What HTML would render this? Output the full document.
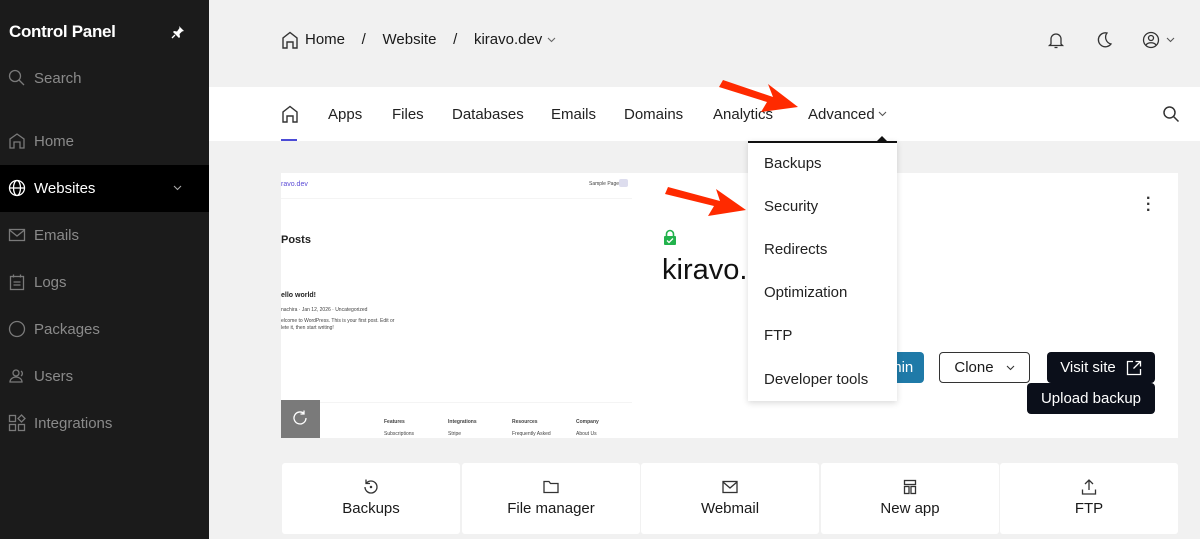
<!DOCTYPE html>
<html><head><meta charset="utf-8"><style>
*{box-sizing:border-box;margin:0;padding:0}
body{width:1200px;height:539px;overflow:hidden;background:#f1f1f1;font-family:"Liberation Sans",sans-serif;color:#1a1a1a;position:relative}
.abs{position:absolute}
#side{left:0;top:0;width:209px;height:539px;background:#1b1b1b}
.si{position:absolute;left:8px;font-size:15px;color:#8a8a8a;display:flex;align-items:center;gap:8px}
.si svg{width:18px;height:18px;stroke:#7a7a7a;fill:none;stroke-width:1.3}
.nav{position:absolute;top:106px;font-size:15px;color:#222}
.dd{left:748px;top:141px;width:149px;height:260px;background:#fff;box-shadow:0 2px 6px rgba(0,0,0,.15);border-top:2px solid #111}
.dd div{position:absolute;left:16px;font-size:15px;color:#222}
.tile{position:absolute;top:463px;width:178px;height:71px;background:#fff;border-radius:3px;text-align:center;font-size:15px}
.tile svg{position:absolute;left:80px;top:15px;width:18px;height:18px;stroke:#333;fill:none;stroke-width:1.3}
.tile span{position:absolute;left:0;right:0;top:37px}
.btn{position:absolute;top:352px;height:31px;border-radius:4px;font-size:15px;display:flex;align-items:center;justify-content:center}
.chev{display:inline-block;vertical-align:middle}
</style></head><body>
<div id="side" class="abs">
 <div class="abs" style="left:9px;top:22px;font-size:17px;font-weight:bold;color:#fff;letter-spacing:-.3px">Control Panel</div>
 <svg class="abs" style="left:171px;top:25px" width="14" height="14" viewBox="0 0 14 14"><path d="M8 1l5 5-2 .5-2.5 2.5.5 3-1 1-6-6 1-1 3 .5L8.5 3z" fill="#fff"/><path d="M4 10L1 13" stroke="#fff" stroke-width="1.3"/></svg>
 <div class="si" style="top:69px"><svg viewBox="0 0 18 18"><circle cx="7" cy="7" r="5.5"/><path d="M11 11l5 5"/></svg>Search</div>
 <div class="si" style="top:132px"><svg viewBox="0 0 18 18"><path d="M2 16V7l7-5 7 5v9h-4v-6H6v6z"/></svg>Home</div>
 <div class="abs" style="left:0;top:165px;width:209px;height:47px;background:#000"></div>
 <div class="si" style="top:179px;color:#fff"><svg viewBox="0 0 18 18" style="stroke:#fff"><circle cx="9" cy="9" r="7.5"/><ellipse cx="9" cy="9" rx="3.5" ry="7.5"/><path d="M1.5 9h15"/></svg>Websites</div>
 <svg class="abs" style="left:173px;top:185px" width="9" height="6" viewBox="0 0 9 6" fill="none" stroke="#aaa" stroke-width="1.1"><path d="M1 1l3.5 3.5L8 1"/></svg>
 <div class="si" style="top:226px"><svg viewBox="0 0 18 18"><rect x="1.5" y="3.5" width="15" height="11"/><path d="M1.5 4l7.5 6 7.5-6"/></svg>Emails</div>
 <div class="si" style="top:273px"><svg viewBox="0 0 18 18"><rect x="2.5" y="3.5" width="13" height="13"/><path d="M5.5 1.5v3M12.5 1.5v3M5.5 9h7M5.5 12h7"/></svg>Logs</div>
 <div class="si" style="top:320px"><svg viewBox="0 0 18 18"><circle cx="9" cy="9" r="7.5"/></svg>Packages</div>
 <div class="si" style="top:367px"><svg viewBox="0 0 18 18"><circle cx="8" cy="6" r="3"/><path d="M2 15c0-3 3-5 6-5s6 2 6 5zM13 4a3 3 0 010 5"/></svg>Users</div>
 <div class="si" style="top:414px"><svg viewBox="0 0 18 18"><rect x="1.5" y="1.5" width="6" height="6"/><rect x="1.5" y="10.5" width="6" height="6"/><rect x="10.5" y="10.5" width="6" height="6"/><path d="M13.5 1l3.5 3.5-3.5 3.5-3.5-3.5z"/></svg>Integrations</div>
</div>

<svg class="abs" style="left:281px;top:31px" width="18" height="18" viewBox="0 0 18 18" fill="none" stroke="#333" stroke-width="1.4"><path d="M2 17V7l7-5.5 7 5.5v10h-4v-6H6v6z"/></svg>
<div class="abs" style="left:305px;top:31px;font-size:15px">Home&nbsp;&nbsp;&nbsp;&nbsp;/&nbsp;&nbsp;&nbsp;&nbsp;Website&nbsp;&nbsp;&nbsp;&nbsp;/&nbsp;&nbsp;&nbsp;&nbsp;kiravo.dev</div>
<svg class="abs" style="left:547px;top:37px" width="9" height="6" viewBox="0 0 9 6" fill="none" stroke="#666" stroke-width="1.1"><path d="M1 1l3.5 3.5L8 1"/></svg>
<svg class="abs" style="left:1047px;top:31px" width="18" height="18" viewBox="0 0 18 18" fill="none" stroke="#333" stroke-width="1.3"><path d="M4 13V8a5 5 0 0110 0v5l1.5 1.5h-13zM7.5 16.5h3"/></svg>
<svg class="abs" style="left:1095px;top:31px" width="18" height="18" viewBox="0 0 18 18" fill="none" stroke="#333" stroke-width="1.3"><path d="M12 2a7 7 0 104 11A7 7 0 0112 2z"/></svg>
<svg class="abs" style="left:1142px;top:31px" width="18" height="18" viewBox="0 0 18 18" fill="none" stroke="#333" stroke-width="1.3"><circle cx="9" cy="9" r="7.5"/><circle cx="9" cy="7" r="2.5"/><path d="M4 14c2-3 8-3 10 0"/></svg>
<svg class="abs" style="left:1166px;top:37px" width="9" height="6" viewBox="0 0 9 6" fill="none" stroke="#555" stroke-width="1.1"><path d="M1 1l3.5 3.5L8 1"/></svg>

<div class="abs" style="left:209px;top:87px;width:991px;height:54px;background:#fff"></div>
<svg class="abs" style="left:281px;top:105px" width="18" height="18" viewBox="0 0 18 18" fill="none" stroke="#333" stroke-width="1.4"><path d="M2 17V7l7-5.5 7 5.5v10h-4v-6H6v6z"/></svg>
<div class="abs" style="left:281px;top:139px;width:16px;height:2px;background:#4b4bd6"></div>
<div class="nav" style="left:328px">Apps</div>
<div class="nav" style="left:392px">Files</div>
<div class="nav" style="left:452px">Databases</div>
<div class="nav" style="left:551px">Emails</div>
<div class="nav" style="left:624px">Domains</div>
<div class="nav" style="left:713px">Analytics</div>
<div class="nav" style="left:808px">Advanced</div>
<svg class="abs" style="left:878px;top:111px" width="9" height="6" viewBox="0 0 9 6" fill="none" stroke="#555" stroke-width="1.1"><path d="M1 1l3.5 3.5L8 1"/></svg>
<svg class="abs" style="left:1162px;top:105px" width="18" height="18" viewBox="0 0 18 18" fill="none" stroke="#333" stroke-width="1.5"><circle cx="7.5" cy="7.5" r="5.5"/><path d="M11.5 11.5l5 5"/></svg>

<div class="abs" style="left:281px;top:173px;width:897px;height:265px;background:#fff"></div>
<div class="abs" style="left:281px;top:173px;width:351px;height:265px;background:#fff;overflow:hidden;font-size:6px;color:#444">
 <div class="abs" style="left:0;top:8px;color:#5b4bd6;font-size:7px">ravo.dev</div>
 <div class="abs" style="left:308px;top:8px;font-size:5px">Sample Page</div>
 <div class="abs" style="left:338px;top:6px;width:9px;height:8px;background:#dde;border-radius:2px"></div>
 <div class="abs" style="left:0;top:25px;width:351px;height:1px;background:#f4f4f4"></div>
 <div class="abs" style="left:0;top:61px;font-size:11px;font-weight:bold;color:#222">Posts</div>
 <div class="abs" style="left:0;top:119px;font-size:7px;font-weight:bold;color:#222">ello world!</div>
 <div class="abs" style="left:0;top:134px;font-size:5px">nachira · Jan 12, 2026 · Uncategorized</div>
 <div class="abs" style="left:0;top:145px;font-size:5px;line-height:7px">elcome to WordPress. This is your first post. Edit or<br>lete it, then start writing!</div>
 <div class="abs" style="left:0;top:229px;width:351px;height:1px;background:#f4f4f4"></div>
 <div class="abs" style="left:103px;top:246px;font-size:5px;font-weight:bold">Features</div>
 <div class="abs" style="left:167px;top:246px;font-size:5px;font-weight:bold">Integrations</div>
 <div class="abs" style="left:231px;top:246px;font-size:5px;font-weight:bold">Resources</div>
 <div class="abs" style="left:295px;top:246px;font-size:5px;font-weight:bold">Company</div>
 <div class="abs" style="left:103px;top:258px;font-size:5px">Subscriptions</div>
 <div class="abs" style="left:167px;top:258px;font-size:5px">Stripe</div>
 <div class="abs" style="left:231px;top:258px;font-size:5px">Frequently Asked</div>
 <div class="abs" style="left:295px;top:258px;font-size:5px">About Us</div>
 <div class="abs" style="left:0;top:227px;width:39px;height:38px;background:#7a7a7a"></div>
 <svg class="abs" style="left:10px;top:236px" width="18" height="18" viewBox="0 0 18 18" fill="none" stroke="#fff" stroke-width="1.3"><path d="M15 9a6 6 0 11-2-4.5M13 1.5v3.5h-3.5"/></svg>
</div>
<svg class="abs" style="left:663px;top:229px" width="14" height="16" viewBox="0 0 14 16"><path d="M3.5 7V5a3.5 3.5 0 017 0v2" fill="none" stroke="#22b24c" stroke-width="1.6"/><rect x="1" y="7" width="12" height="9" rx="1" fill="#22b24c"/><path d="M4 11.5l2 2 4-4" stroke="#fff" stroke-width="1.3" fill="none"/></svg>
<div class="abs" style="left:662px;top:254px;font-size:29px;color:#111">kiravo.dev</div>
<div class="abs" style="left:1146px;top:196px;font-size:16px;font-weight:bold;line-height:6px;color:#333">·<br>·<br>·</div>
<div class="btn" style="left:860px;width:64px;background:#1f7aa8;color:#fff">Admin</div>
<div class="btn" style="left:939px;width:91px;border:1px solid #333;background:#fff">Clone <svg style="margin-left:12px" width="9" height="6" viewBox="0 0 9 6" fill="none" stroke="#333" stroke-width="1.1"><path d="M1 1l3.5 3.5L8 1"/></svg></div>
<div class="btn" style="left:1047px;width:108px;background:#0b0f1a;color:#fff">Visit site <svg style="margin-left:10px" width="16" height="16" viewBox="0 0 16 16" fill="none" stroke="#fff" stroke-width="1.3"><path d="M7 1.5H1.5v13h13V9M9.5 1.5h5v5M14.5 1.5l-7 7"/></svg></div>
<div class="btn" style="left:1027px;top:383px;width:128px;background:#0b0f1a;color:#fff">Upload backup</div>

<div class="abs dd">
 <div style="top:12px">Backups</div><div style="top:55px">Security</div><div style="top:98px">Redirects</div>
 <div style="top:141px">Optimization</div><div style="top:184px">FTP</div><div style="top:228px">Developer tools</div>
</div>
<div class="abs" style="left:877px;top:136px;width:0;height:0;border-left:5px solid transparent;border-right:5px solid transparent;border-bottom:5px solid #111"></div>

<svg class="abs" style="left:0;top:0" width="1200" height="539" viewBox="0 0 1200 539"><g fill="#ff2a00">
<path d="M723 80l50 17 -5 -13 30 23 -37 5 6 -10 -48 -15z"/>
<path d="M668 187l52 14 -4 -12 30 21 -38 6 6 -10 -49 -12z"/></g></svg>

<div class="tile" style="left:282px"><svg viewBox="0 0 18 18"><path d="M3 9a6 6 0 106-6 6 6 0 00-4.5 2M4 1.5v4h4"/><circle cx="9" cy="9" r=".6"/></svg><span>Backups</span></div>
<div class="tile" style="left:462px"><svg viewBox="0 0 18 18"><path d="M2 3.5h5l1.5 2h7.5v9H2z"/></svg><span>File manager</span></div>
<div class="tile" style="left:641px"><svg viewBox="0 0 18 18"><rect x="2" y="3.5" width="14" height="11"/><path d="M2 4l7 6 7-6"/></svg><span>Webmail</span></div>
<div class="tile" style="left:821px"><svg viewBox="0 0 18 18"><rect x="3.5" y="2.5" width="11" height="4"/><rect x="3.5" y="8.5" width="4.5" height="7"/><rect x="10" y="8.5" width="4.5" height="7"/></svg><span>New app</span></div>
<div class="tile" style="left:1000px"><svg viewBox="0 0 18 18"><path d="M9 12V2M5 6l4-4 4 4M2.5 11.5v4.5h13v-4.5"/></svg><span>FTP</span></div>
</body></html>
